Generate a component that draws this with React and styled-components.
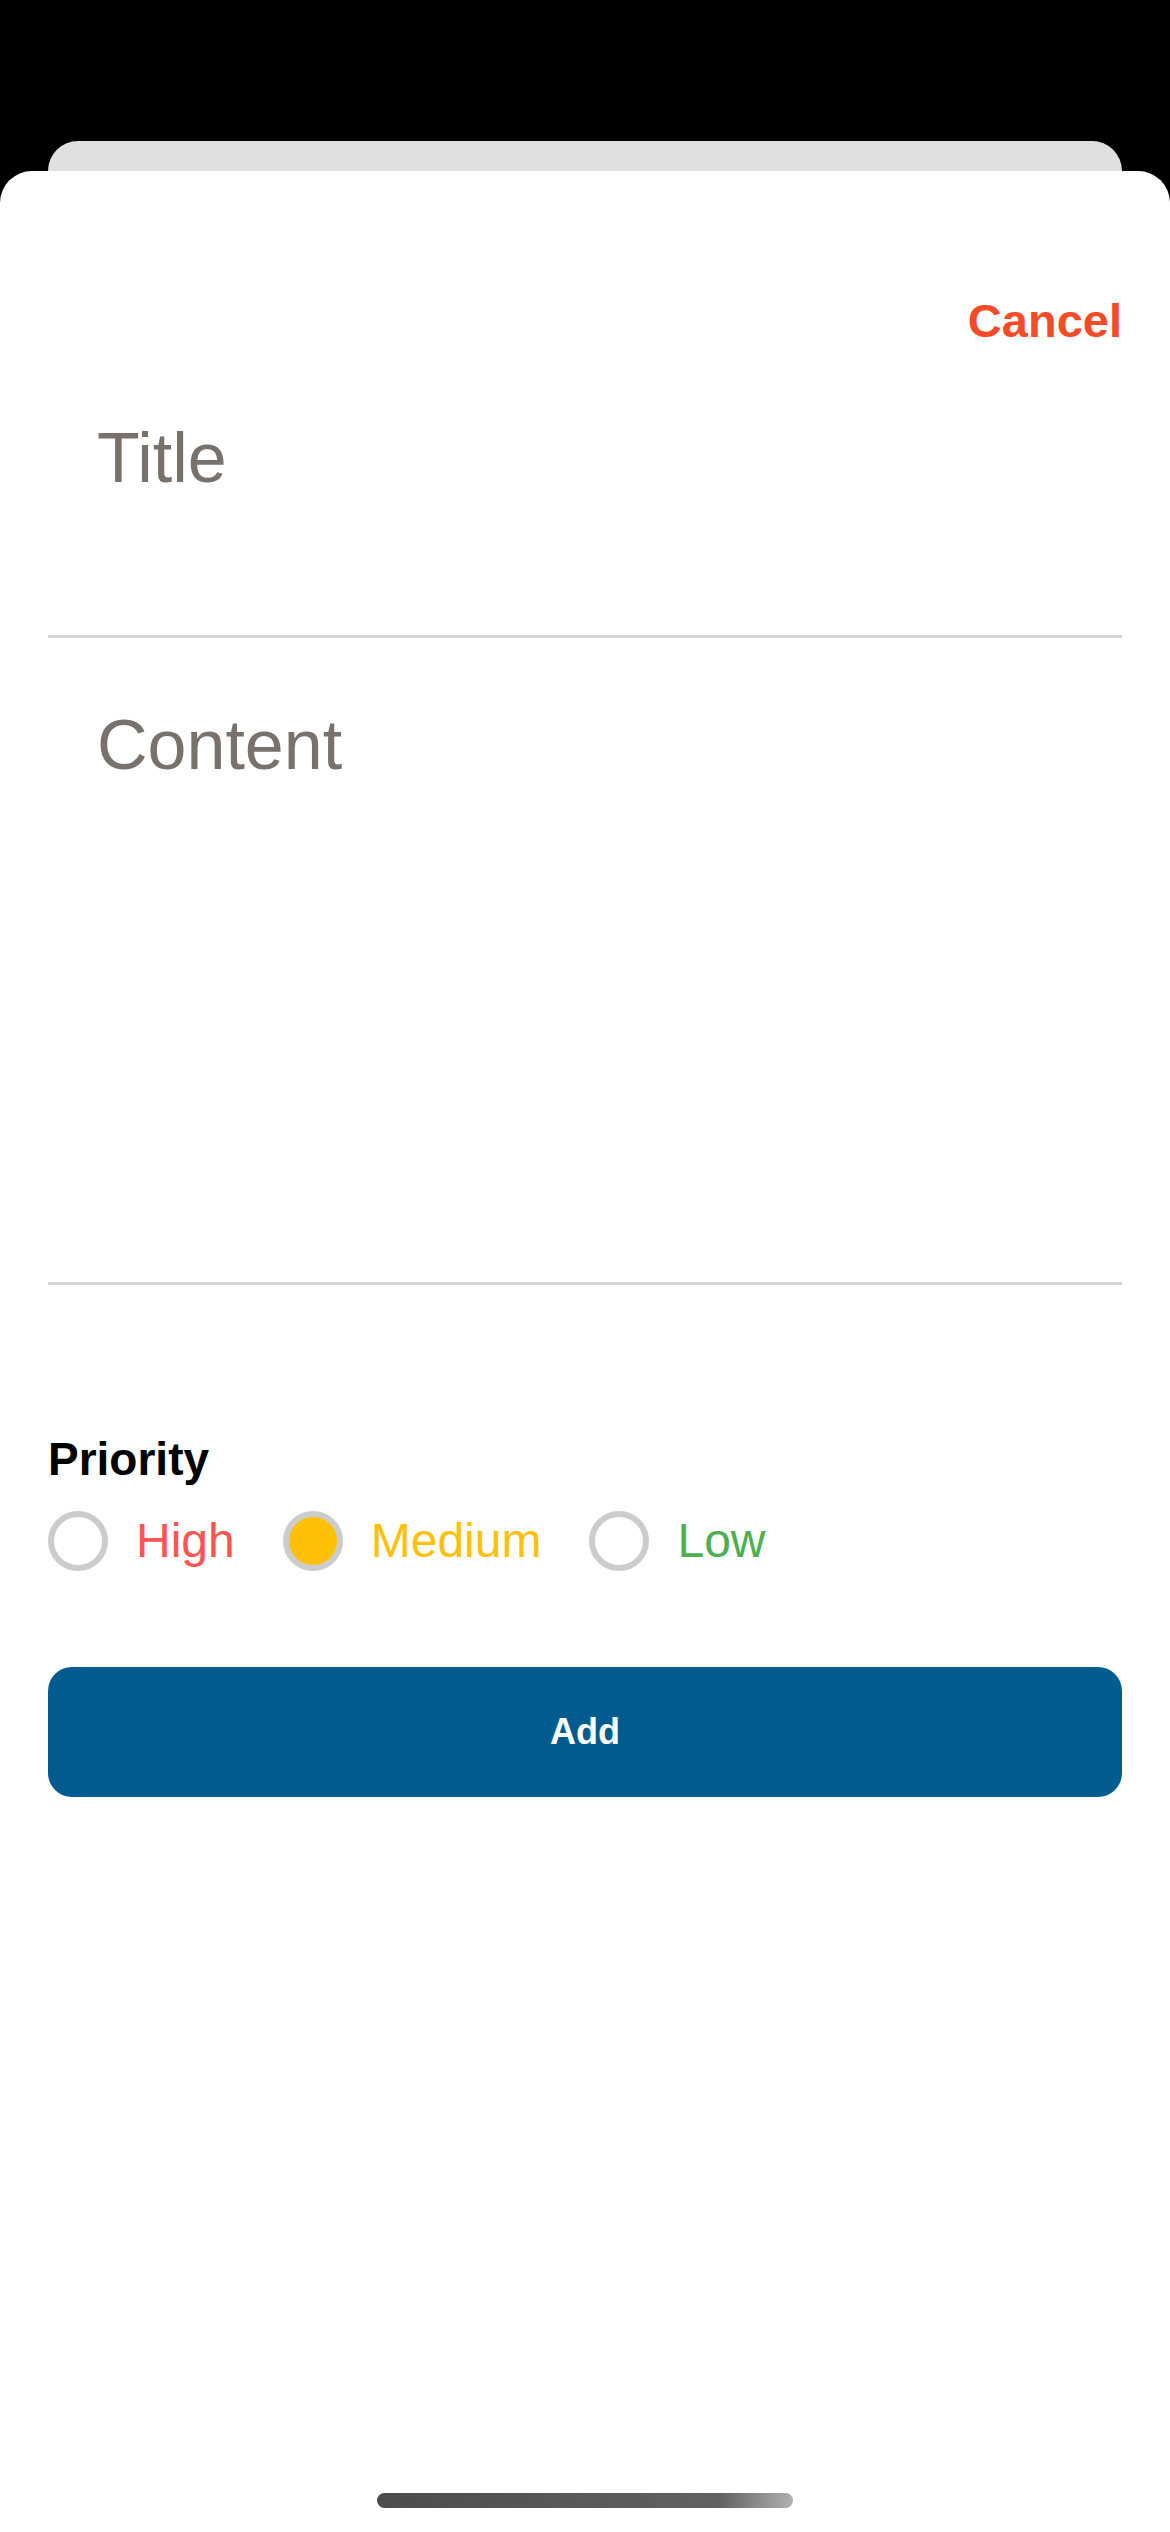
import { useState } from 'react';
import styled, { createGlobalStyle } from 'styled-components';

const GlobalStyle = createGlobalStyle`
    html, body {
        margin: 0;
        padding: 0;
        background: #000;
    }
    body {
        font-family: "Liberation Sans", Arial, sans-serif;
    }
`

const Screen = styled.div`
    min-height: 2532px;
    box-sizing: border-box;
    padding-top: 141px;
    display: flex;
    flex-direction: column;
`

const BackCard = styled.div`
    flex-shrink: 0;
    height: 30px;
    margin: 0 48px;
    background: #e0e0e0;
    border-radius: 32px 32px 0 0;
`

const Sheet = styled.div`
    flex: 1;
    display: flex;
    flex-direction: column;
    padding: 0 48px;
    background: #fff;
    border-radius: 32px 32px 0 0;
`

const TopBar = styled.div`
    display: flex;
    justify-content: flex-end;
    padding-top: 122px;
`

const CancelBtn = styled.button`
    padding: 0;
    border: 0;
    background: none;
    font-family: inherit;
    font-size: 47px;
    line-height: 56px;
    font-weight: 700;
    color: #f54b28;
    cursor: pointer;
`

const fieldText = `
    display: block;
    width: 100%;
    box-sizing: border-box;
    margin: 0;
    border: 0;
    border-bottom: 3px solid #d6d3d1;
    border-radius: 0;
    outline: none;
    background: transparent;
    font-family: "Liberation Sans", Arial, sans-serif;
    font-size: 70px;
    line-height: 84px;
    color: #1c1917;
    &::placeholder {
        color: #79716b;
        opacity: 1;
    }
`

const TitleInput = styled.input`
    ${fieldText}
    height: 289px;
    padding: 67px 0 135px 49px;
`

const ContentInput = styled.textarea`
    ${fieldText}
    height: 647px;
    padding: 65px 0 0 49px;
    resize: none;
`

const PriorityLabel = styled.div`
    margin-top: 147px;
    font-size: 46px;
    line-height: 54px;
    font-weight: 700;
    color: #000;
`

const RadioRow = styled.div`
    display: flex;
    align-items: center;
    gap: 48px;
    margin-top: 25px;
`

const RadioOption = styled.label`
    display: flex;
    align-items: center;
    gap: 28px;
    font-size: 48px;
    line-height: 58px;
    color: ${p => p.$color};
    cursor: pointer;

    input {
        display: none;
    }
`

const RadioCircle = styled.span`
    width: 60px;
    height: 60px;
    box-sizing: border-box;
    border: 6px solid #cccccc;
    border-radius: 50%;
    background: ${p => p.$checked ? p.$color : 'transparent'};
`

const AddBtn = styled.button`
    margin-top: 96px;
    width: 100%;
    height: 130px;
    border: 0;
    border-radius: 24px;
    background: #025b8f;
    color: #fff;
    font-family: inherit;
    font-size: 36px;
    font-weight: 700;
    cursor: pointer;
`

const HomeIndicator = styled.div`
    margin-top: auto;
    margin-bottom: 24px;
    align-self: center;
    width: 416px;
    height: 15px;
    border-radius: 8px;
    background: linear-gradient(100deg, #4c4c4c 0%, #616161 82%, #b2b2b2 100%);
`

const priorities = [
    { key: 'high', label: 'High', color: '#ff5252' },
    { key: 'medium', label: 'Medium', color: '#ffc107' },
    { key: 'low', label: 'Low', color: '#4caf50' },
]

export default function App() {
    const [title, setTitle] = useState('');
    const [content, setContent] = useState('');
    const [priority, setPriority] = useState('medium');

    return (
        <>
            <GlobalStyle />
            <Screen>
                <BackCard />
                <Sheet>
                    <TopBar>
                        <CancelBtn>Cancel</CancelBtn>
                    </TopBar>
                    <TitleInput placeholder='Title' value={title} onChange={(e) => setTitle(e.target.value)} />
                    <ContentInput placeholder='Content' value={content} onChange={(e) => setContent(e.target.value)} />

                    <PriorityLabel>Priority</PriorityLabel>
                    <RadioRow>
                        {priorities.map(p => (
                            <RadioOption key={p.key} $color={p.color}>
                                <input
                                    type='radio'
                                    name='priority'
                                    checked={priority === p.key}
                                    onChange={() => setPriority(p.key)}
                                />
                                <RadioCircle $checked={priority === p.key} $color={p.color} />
                                {p.label}
                            </RadioOption>
                        ))}
                    </RadioRow>

                    <AddBtn>Add</AddBtn>
                    <HomeIndicator />
                </Sheet>
            </Screen>
        </>
    )
}
